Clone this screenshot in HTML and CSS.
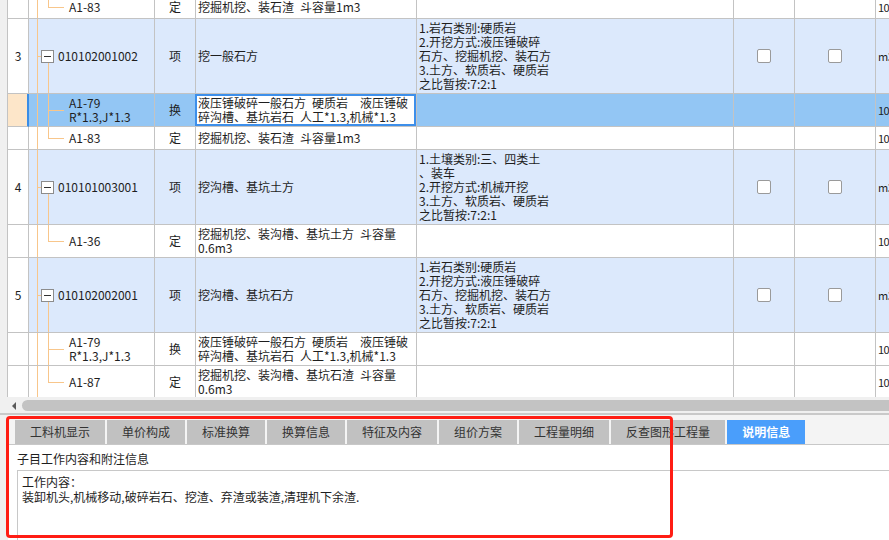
FILE: index.html
```html
<!DOCTYPE html>
<html lang="zh-CN">
<head>
<meta charset="UTF-8">
<title>清单定额</title>
<link rel="stylesheet" href="styles.css">
</head>
<body>
<div class="grid">
  <div class="row single first">
    <div class="c gut"></div>
    <div class="c num"></div>
    <div class="c tree child last">A1-83</div>
    <div class="c kind">定</div>
    <div class="c name">挖掘机挖、装石渣&ensp;斗容量1m3</div>
    <div class="c feat"></div>
    <div class="c chk"></div>
    <div class="c chk"></div>
    <div class="c unit">10</div>
  </div>

  <div class="row parent">
    <div class="c gut"></div>
    <div class="c num">3</div>
    <div class="c tree node"><span class="tog"></span>010102001002</div>
    <div class="c kind">项</div>
    <div class="c name">挖一般石方</div>
    <div class="c feat">1.岩石类别:硬质岩
2.开挖方式:液压锤破碎
石方、挖掘机挖、装石方
3.土方、软质岩、硬质岩
之比暂按:7:2:1</div>
    <div class="c chk"><span class="box"></span></div>
    <div class="c chk"><span class="box"></span></div>
    <div class="c unit">m3</div>
  </div>
  <div class="row double sel">
    <div class="c gut"></div>
    <div class="c num"></div>
    <div class="c tree child">A1-79
R*1.3,J*1.3</div>
    <div class="c kind">换</div>
    <div class="c name active">液压锤破碎一般石方&ensp;硬质岩&ensp;&ensp;液压锤破
碎沟槽、基坑岩石&ensp;人工*1.3,机械*1.3</div>
    <div class="c feat"></div>
    <div class="c chk"></div>
    <div class="c chk"></div>
    <div class="c unit">10</div>
  </div>
  <div class="row single">
    <div class="c gut"></div>
    <div class="c num"></div>
    <div class="c tree child last">A1-83</div>
    <div class="c kind">定</div>
    <div class="c name">挖掘机挖、装石渣&ensp;斗容量1m3</div>
    <div class="c feat"></div>
    <div class="c chk"></div>
    <div class="c chk"></div>
    <div class="c unit">10</div>
  </div>

  <div class="row parent">
    <div class="c gut"></div>
    <div class="c num">4</div>
    <div class="c tree node"><span class="tog"></span>010101003001</div>
    <div class="c kind">项</div>
    <div class="c name">挖沟槽、基坑土方</div>
    <div class="c feat">1.土壤类别:三、四类土
、装车
2.开挖方式:机械开挖
3.土方、软质岩、硬质岩
之比暂按:7:2:1</div>
    <div class="c chk"><span class="box"></span></div>
    <div class="c chk"><span class="box"></span></div>
    <div class="c unit">m3</div>
  </div>
  <div class="row double">
    <div class="c gut"></div>
    <div class="c num"></div>
    <div class="c tree child last">A1-36</div>
    <div class="c kind">定</div>
    <div class="c name">挖掘机挖、装沟槽、基坑土方&ensp;斗容量
0.6m3</div>
    <div class="c feat"></div>
    <div class="c chk"></div>
    <div class="c chk"></div>
    <div class="c unit">10</div>
  </div>

  <div class="row parent">
    <div class="c gut"></div>
    <div class="c num">5</div>
    <div class="c tree node"><span class="tog"></span>010102002001</div>
    <div class="c kind">项</div>
    <div class="c name">挖沟槽、基坑石方</div>
    <div class="c feat">1.岩石类别:硬质岩
2.开挖方式:液压锤破碎
石方、挖掘机挖、装石方
3.土方、软质岩、硬质岩
之比暂按:7:2:1</div>
    <div class="c chk"><span class="box"></span></div>
    <div class="c chk"><span class="box"></span></div>
    <div class="c unit">m3</div>
  </div>
  <div class="row double">
    <div class="c gut"></div>
    <div class="c num"></div>
    <div class="c tree child">A1-79
R*1.3,J*1.3</div>
    <div class="c kind">换</div>
    <div class="c name">液压锤破碎一般石方&ensp;硬质岩&ensp;&ensp;液压锤破
碎沟槽、基坑岩石&ensp;人工*1.3,机械*1.3</div>
    <div class="c feat"></div>
    <div class="c chk"></div>
    <div class="c chk"></div>
    <div class="c unit">10</div>
  </div>
  <div class="row double">
    <div class="c gut"></div>
    <div class="c num"></div>
    <div class="c tree child last">A1-87</div>
    <div class="c kind">定</div>
    <div class="c name">挖掘机挖、装沟槽、基坑石渣&ensp;斗容量
0.6m3</div>
    <div class="c feat"></div>
    <div class="c chk"></div>
    <div class="c chk"></div>
    <div class="c unit">10</div>
  </div>
</div>

<div class="hscroll">
  <span class="arrow"></span>
  <span class="thumb"></span>
</div>
<div class="split"></div>

<div class="panel">
  <div class="tabs">
    <span class="tab">工料机显示</span>
    <span class="tab">单价构成</span>
    <span class="tab">标准换算</span>
    <span class="tab">换算信息</span>
    <span class="tab">特征及内容</span>
    <span class="tab">组价方案</span>
    <span class="tab">工程量明细</span>
    <span class="tab">反查图形工程量</span>
    <span class="tab on">说明信息</span>
  </div>
  <div class="caption">子目工作内容和附注信息</div>
  <div class="memo">工作内容：
装卸机头,机械移动,破碎岩石、挖渣、弃渣或装渣,清理机下余渣.</div>
</div>

<div class="mark"></div>
</body>
</html>
```

FILE: styles.css
```css
*{
  margin:0;
  padding:0;
  box-sizing:border-box;
}
body{
  width:889px;
  height:540px;
  overflow:hidden;
  position:relative;
  background:#f0f0f0;
  font:12px "Noto Sans CJK SC", sans-serif;
  color:#1e1e1e;
}

/* grid */
.grid{
  height:397px;
  overflow:hidden;
  background:#fff;
}
.row{
  display:grid;
  grid-template-columns:8px 21px 126px 41px 221px 317px 61px 81px 1fr;
}
.row.first{ margin-top:-4px; }
.row.single{ height:23px; }
.row.double{ height:33px; }
.row.parent{ height:75px; }
.c{
  display:flex;
  align-items:center;
  border-right:1px solid #c3c3c3;
  border-bottom:1px solid #c3c3c3;
  background-color:#fff;
  line-height:14px;
  white-space:pre;
  overflow:hidden;
}
.gut{
  background-color:#f0f0f0;
  border-bottom:none;
}
.num, .kind, .chk{ justify-content:center; }
.name, .feat{ padding-left:2px; }
.unit{
  padding-left:2px;
  border-right:none;
  font-size:11px;
  letter-spacing:-0.5px;
}

.row.parent .c{ background-color:#dce9fc; }
.row.parent .gut{ background-color:#f0f0f0; }
.row.parent .num{ background-color:#fff; }
.row.sel .c{ background-color:#93c6f4; }
.row.sel .gut{ background-color:#f0f0f0; }
.row.sel .num{
  background-color:#fde6c9;
  border-right:2px solid #3a8de6;
}
.row.sel .active{
  background-color:#fff;
  position:relative;
  overflow:visible;
}
.active::after{
  content:"";
  position:absolute;
  left:-1px;
  top:0;
  right:0;
  bottom:0;
  border:2px solid #3d8fea;
}

.box{
  width:14px;
  height:14px;
  border:1px solid #9a9a9a;
  border-radius:2px;
  background:#fff;
}

/* tree lines */
.tree{
  position:relative;
  background-image:linear-gradient(#f8c68b, #f8c68b);
  background-size:1px 100%;
  background-position:8px 0;
  background-repeat:no-repeat;
}
.tree.node{ padding-left:12px; }
.tree.node::before{
  content:"";
  position:absolute;
  left:8px;
  top:50%;
  width:4px;
  height:1px;
  background:#f8c68b;
}
.tree.node::after{
  content:"";
  position:absolute;
  left:19px;
  top:calc(50% + 7px);
  bottom:0;
  width:1px;
  background:#f8c68b;
}
.tog{
  position:relative;
  width:13px;
  height:13px;
  margin-right:4px;
  border:1px solid #8c8c8c;
  background:#fff;
}
.tog::after{
  content:"";
  position:absolute;
  left:2px;
  top:5px;
  width:7px;
  height:1px;
  background:#333;
}
.tree.child{ padding-left:40px; }
.tree.child::before{
  content:"";
  position:absolute;
  left:19px;
  top:0;
  bottom:0;
  width:1px;
  background:#f8c68b;
}
.tree.child.last::before{ bottom:50%; }
.tree.child::after{
  content:"";
  position:absolute;
  left:19px;
  top:50%;
  width:16px;
  height:1px;
  background:#f8c68b;
}

/* horizontal scrollbar */
.hscroll{
  height:11px;
  margin-top:3px;
  display:flex;
  align-items:center;
}
.arrow{
  width:0;
  height:0;
  margin:0 6px 0 12px;
  border-top:4px solid transparent;
  border-bottom:4px solid transparent;
  border-right:4px solid #5a5a5a;
}
.thumb{
  flex:1;
  height:11px;
  border-radius:6px 0 0 6px;
  background:#c3c3c3;
}
.split{
  height:2px;
  margin-top:2px;
  background:#c9c9c9;
}

/* bottom panel */
.panel{
  margin-left:8px;
  height:125px;
  background:#fff;
}
.tabs{
  display:flex;
  gap:2px;
  height:30px;
  padding:5px 0 0 7px;
  background:#f4f4f4;
  border-bottom:1px solid #c8c8c8;
}
.tab{
  height:24px;
  line-height:24px;
  padding:0 15px;
  background:#c1c1c1;
  color:#333;
}
.tab.on{
  background:#4a9efb;
  color:#fff;
  font-weight:bold;
}
.caption{
  height:25px;
  padding:6px 0 0 9px;
  line-height:16px;
}
.memo{
  margin-left:9px;
  height:80px;
  padding:3px 4px;
  border-top:1px solid #c8c8c8;
  border-left:1px solid #c8c8c8;
  line-height:15px;
  white-space:pre;
}

/* red annotation frame */
.mark{
  position:absolute;
  left:6px;
  top:416px;
  width:667px;
  height:122px;
  border:3px solid #ff1d14;
  border-radius:4px;
}
```
